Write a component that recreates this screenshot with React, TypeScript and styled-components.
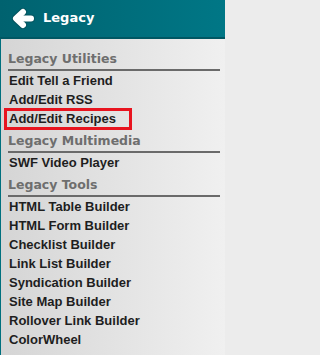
import React from "react";
import styled, { createGlobalStyle } from "styled-components";

const Global = createGlobalStyle`
  html, body { margin: 0; padding: 0; background: #ececec; }
  body { width: 225px; height: 355px; overflow: hidden; }
`;

const Wrap = styled.div`
  width: 225px;
  height: 355px;
  display: flex;
  flex-direction: column;
  overflow: hidden;
`;

const Header = styled.div`
  height: 37px;
  flex: none;
  display: flex;
  align-items: center;
  gap: 8px;
  padding-left: 12px;
  background: linear-gradient(to right, #00626f, #007786);
  border-bottom: 2px solid #005763;
`;

const Title = styled.span`
  font-family: "DejaVu Sans", Verdana, sans-serif;
  font-weight: bold;
  font-size: 13px;
  color: #ffffff;
  margin-top: -2px;
`;

const Panel = styled.div`
  flex: 1;
  border-left: 1px solid #00707e;
  background: linear-gradient(to right, #d5d5d5, #f0f0f0);
  padding: 7px 5px 0 7px;
  display: flex;
  flex-direction: column;
`;

const SectionTitle = styled.div`
  font-family: "DejaVu Sans", Verdana, sans-serif;
  font-weight: bold;
  font-size: 12.5px;
  line-height: 16px;
  color: #6e6e6e;
  padding: 5px 0 2px 0;
  border-bottom: 2px solid #6a6a6a;
`;

const Item = styled.div<{ $marked?: boolean }>`
  position: relative;
  font-family: "Liberation Sans", Arial, sans-serif;
  font-weight: bold;
  font-size: 13px;
  line-height: 19px;
  color: #1e1e1e;
  padding-left: 1px;
  &::after {
    content: "";
    display: ${(p) => (p.$marked ? "block" : "none")};
    position: absolute;
    left: -4px;
    top: -1px;
    width: 128px;
    height: 22px;
    border: 3px solid #e8141f;
    box-sizing: border-box;
  }
`;

const BackArrow = () => (
  <svg width="23" height="21" viewBox="0 0 23 21">
    <g fill="none" stroke="#0b3a40" strokeOpacity="0.35" strokeWidth="8" strokeLinecap="round" strokeLinejoin="round">
      <path d="M19 10.5 H5" />
      <path d="M11 4 L4 10.5 L11 17" />
    </g>
    <g fill="none" stroke="#ffffff" strokeWidth="6" strokeLinecap="round" strokeLinejoin="round">
      <path d="M19 10.5 H5" />
      <path d="M11 4 L4 10.5 L11 17" />
    </g>
  </svg>
);

const sections: { title: string; items: string[] }[] = [
  { title: "Legacy Utilities", items: ["Edit Tell a Friend", "Add/Edit RSS", "Add/Edit Recipes"] },
  { title: "Legacy Multimedia", items: ["SWF Video Player"] },
  {
    title: "Legacy Tools",
    items: [
      "HTML Table Builder",
      "HTML Form Builder",
      "Checklist Builder",
      "Link List Builder",
      "Syndication Builder",
      "Site Map Builder",
      "Rollover Link Builder",
      "ColorWheel",
    ],
  },
];

export default function App() {
  return (
    <Wrap>
      <Global />
      <Header>
        <BackArrow />
        <Title>Legacy</Title>
      </Header>
      <Panel>
        {sections.map((s) => (
          <React.Fragment key={s.title}>
            <SectionTitle>{s.title}</SectionTitle>
            {s.items.map((it) => (
              <Item key={it} $marked={it === "Add/Edit Recipes"}>
                {it}
              </Item>
            ))}
          </React.Fragment>
        ))}
      </Panel>
    </Wrap>
  );
}
